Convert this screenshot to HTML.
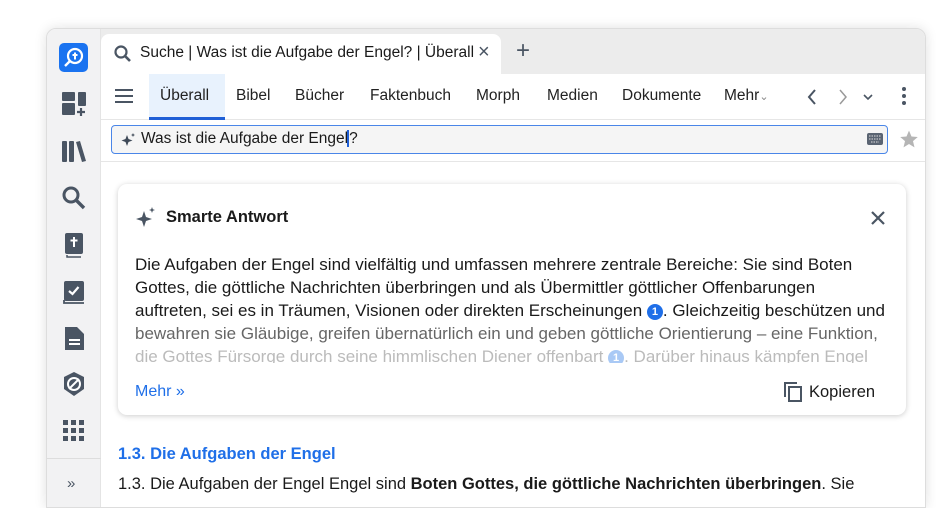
<!DOCTYPE html>
<html><head><meta charset="utf-8"><style>
*{box-sizing:border-box;margin:0;padding:0}
body{width:936px;height:496px;overflow:hidden;background:#fff;font-family:"Liberation Sans",sans-serif;color:#1a1a1a;position:relative}
.win{position:absolute;left:46px;top:28px;width:880px;height:480px;background:#fff;border-radius:10px 10px 0 0;box-shadow:0 0 12px rgba(0,0,0,.12);overflow:hidden;border:1px solid #ddd}
.side{position:absolute;left:0;top:0;width:54px;height:100%;background:#f2f2f3;border-right:1px solid #e4e4e4}
.ic{position:absolute;left:13px}
.tabbar{position:absolute;left:54px;top:0;right:0;height:45px;background:#ececec}
.tab{position:absolute;left:0;top:5px;width:400px;height:40px;background:#fff;border-radius:8px 8px 0 0}
.t{position:absolute;white-space:nowrap}
.nav{position:absolute;left:54px;top:45px;right:0;height:46px;background:#fff;border-bottom:1px solid #e6e6e6;font-size:15.5px;color:#222}
.nav .t{top:13px}
.act{position:absolute;left:48px;top:0;width:76px;height:46px;background:#e8f2fd;border-bottom:3px solid #1f5fd6}
.srch{position:absolute;left:64px;top:96px;width:777px;height:29px;border:1.5px solid #4a86e8;border-radius:4px;background:#f5f5f5}
.card{position:absolute;left:71px;top:155px;width:788px;height:231px;background:#fff;border-radius:9px;box-shadow:0 1px 6px rgba(0,0,0,.2)}
.card .l{position:absolute;left:17px;font-size:17px;white-space:nowrap}
.n{display:inline-block;width:16px;height:16px;border-radius:50%;background:#1f6fe8;color:#fff;font-size:11px;font-weight:bold;text-align:center;line-height:16px;vertical-align:1px}
</style></head><body>
<div class="win">
 <div class="side">
  <div class="ic" style="top:14px;left:12px;width:29px;height:29px;background:#1a73f0;border-radius:5px">
   <svg width="29" height="29" viewBox="0 0 29 29"><circle cx="16" cy="13" r="7" fill="none" stroke="#fff" stroke-width="2.2"/><line x1="11" y1="18" x2="6" y2="23" stroke="#fff" stroke-width="2.4"/><path d="M16 9.5v7M13.5 12h5" stroke="#fff" stroke-width="2"/></svg></div>
  <svg class="ic" style="top:61px" width="28" height="28" viewBox="0 0 28 28" fill="#4a5563"><rect x="2" y="2" width="13" height="9" rx="1"/><rect x="18" y="2" width="8" height="14" rx="1"/><rect x="2" y="13" width="13" height="12" rx="1"/><path d="M21 18v8M17 22h8" stroke="#4a5563" stroke-width="2.2"/></svg>
  <svg class="ic" style="top:109px" width="28" height="28" viewBox="0 0 28 28" fill="#4a5563"><rect x="2" y="3" width="5" height="21" rx="1"/><rect x="9" y="3" width="5" height="21" rx="1"/><path d="M16 4l4-1 6 20-4 1z"/></svg>
  <svg class="ic" style="top:155px" width="28" height="28" viewBox="0 0 28 28"><circle cx="11" cy="11" r="7" fill="none" stroke="#4a5563" stroke-width="3"/><line x1="16" y1="16" x2="24" y2="24" stroke="#4a5563" stroke-width="3.4"/></svg>
  <svg class="ic" style="top:202px" width="28" height="28" viewBox="0 0 28 28"><rect x="5" y="2" width="18" height="21" rx="2" fill="#4a5563"/><path d="M14 6v10M10.5 9.5h7" stroke="#fff" stroke-width="2"/><path d="M7 24v2h14" stroke="#4a5563" stroke-width="1.5" fill="none"/></svg>
  <svg class="ic" style="top:249px" width="28" height="28" viewBox="0 0 28 28"><rect x="4" y="3" width="20" height="20" rx="2" fill="#4a5563"/><path d="M9 13l3.5 3 6-7" stroke="#fff" stroke-width="2.2" fill="none"/><path d="M4 22v3h20" stroke="#4a5563" stroke-width="1.8" fill="none"/></svg>
  <svg class="ic" style="top:295px" width="28" height="28" viewBox="0 0 28 28"><path d="M5 3h12l7 7v16H5z" fill="#4a5563"/><path d="M9 16h11M9 20h11" stroke="#fff" stroke-width="2"/></svg>
  <svg class="ic" style="top:341px" width="28" height="28" viewBox="0 0 28 28"><path d="M14 2l10 5v12l-10 7-10-7V7z" fill="#4a5563"/><circle cx="14" cy="14" r="6" fill="none" stroke="#fff" stroke-width="2"/><path d="M9 19l10-10" stroke="#fff" stroke-width="2"/></svg>
  <svg class="ic" style="top:388px" width="28" height="28" viewBox="0 0 28 28" fill="#4a5563"><rect x="3" y="3" width="5" height="5"/><rect x="11" y="3" width="5" height="5"/><rect x="19" y="3" width="5" height="5"/><rect x="3" y="11" width="5" height="5"/><rect x="11" y="11" width="5" height="5"/><rect x="19" y="11" width="5" height="5"/><rect x="3" y="19" width="5" height="5"/><rect x="11" y="19" width="5" height="5"/><rect x="19" y="19" width="5" height="5"/></svg>
  <div style="position:absolute;left:0;top:429px;width:54px;height:1px;background:#ddd"></div>
  <div class="t" style="left:20px;top:446px;font-size:15px;color:#4a5563">»</div>
 </div>
 <div class="tabbar">
  <div class="tab">
   <svg style="position:absolute;left:12px;top:10px" width="20" height="20" viewBox="0 0 20 20"><circle cx="8" cy="8" r="5.5" fill="none" stroke="#4a5563" stroke-width="2.2"/><line x1="12" y1="12" x2="17" y2="17" stroke="#4a5563" stroke-width="2.6"/></svg>
   <div class="t" style="left:39px;top:10px;font-size:15.5px">Suche | Was ist die Aufgabe der Engel? | Überall</div>
   <div class="t" style="left:377px;top:7px;font-size:20px;color:#4a5563">×</div>
  </div>
  <div class="t" style="left:415px;top:8px;font-size:24px;color:#4a5563">+</div>
 </div>
 <div class="nav">
  <svg style="position:absolute;left:14px;top:14px" width="18" height="16"><path d="M0 2h18M0 8h18M0 14h18" stroke="#4a5563" stroke-width="2"/></svg>
  <div class="act"></div>
  <div class="t" style="left:59px">Überall</div>
  <div class="t" style="left:135px">Bibel</div>
  <div class="t" style="left:194px">Bücher</div>
  <div class="t" style="left:269px">Faktenbuch</div>
  <div class="t" style="left:375px">Morph</div>
  <div class="t" style="left:446px">Medien</div>
  <div class="t" style="left:521px">Dokumente</div>
  <div class="t" style="left:623px">Mehr<span style="font-size:11px;color:#888">&#8964;</span></div>
  <svg style="position:absolute;left:706px;top:14px" width="80" height="18"><path d="M8 2l-6 7 6 7" stroke="#4a5563" stroke-width="2" fill="none"/><path d="M33 2l6 7-6 7" stroke="#999" stroke-width="1.5" fill="none"/><path d="M57 7l4 4 4-4" stroke="#4a5563" stroke-width="1.6" fill="none"/></svg>
  <svg style="position:absolute;left:800px;top:12px" width="6" height="20" fill="#4a5563"><circle cx="3" cy="3" r="2"/><circle cx="3" cy="10" r="2"/><circle cx="3" cy="17" r="2"/></svg>
 </div>
 <div style="position:absolute;left:54px;top:91px;right:0;height:42px;border-bottom:1px solid #e6e6e6"></div>
 <div class="srch">
  <svg style="position:absolute;left:8px;top:6px" width="16" height="16" viewBox="0 0 16 16" fill="#3f4a58"><path d="M7 3l1.5 4 4 1.5-4 1.5L7 14l-1.5-4-4-1.5 4-1.5z"/><path d="M13 1l.6 1.4 1.4.6-1.4.6L13 5l-.6-1.4L11 3l1.4-.6z"/></svg>
  <div class="t" style="left:29px;top:4px;font-size:15.5px">Was ist die Aufgabe der Engel<span style="border-left:2px solid #1f5fd6;margin-left:-1px"></span>?</div>
  <svg style="position:absolute;right:4px;top:7px" width="16" height="12"><rect x="0" y="0" width="16" height="12" rx="2" fill="#5a6472"/><path d="M2 3h12M2 6h12M4 9h8" stroke="#ddd" stroke-width="1" stroke-dasharray="1.5 1"/></svg>
 </div>
 <svg style="position:absolute;left:852px;top:100px" width="20" height="20" viewBox="0 0 24 24"><path d="M12 2l3 7 7.5.6-5.7 5 1.8 7.4L12 18l-6.6 4 1.8-7.4-5.7-5L9 9z" fill="#b5b5b5"/></svg>
 <div class="card">
  <svg style="position:absolute;left:17px;top:22px" width="22" height="22" viewBox="0 0 22 22" fill="#4a5563"><path d="M9 5l2 6 6 2-6 2-2 6-2-6-6-2 6-2z"/><path d="M17 1l.8 2.2L20 4l-2.2.8L17 7l-.8-2.2L14 4l2.2-.8z"/></svg>
  <div class="t" style="left:48px;top:24px;font-size:16.5px;font-weight:bold">Smarte Antwort</div>
  <svg style="position:absolute;left:753px;top:27px" width="14" height="14"><path d="M1 1l12 12M13 1L1 13" stroke="#4a5563" stroke-width="2.2"/></svg>
  <div class="l" style="top:71px">Die Aufgaben der Engel sind vielfältig und umfassen mehrere zentrale Bereiche: Sie sind Boten</div>
  <div class="l" style="top:94px">Gottes, die göttliche Nachrichten überbringen und als Übermittler göttlicher Offenbarungen</div>
  <div class="l" style="top:117px">auftreten, sei es in Träumen, Visionen oder direkten Erscheinungen <span class="n">1</span>. Gleichzeitig beschützen und</div>
  <div class="l" style="top:140px;color:#666">bewahren sie Gläubige, greifen übernatürlich ein und geben göttliche Orientierung – eine Funktion,</div>
  <div style="position:absolute;left:0;top:163px;width:100%;height:16px;overflow:hidden"><div class="l" style="top:0;color:#bbb">die Gottes Fürsorge durch seine himmlischen Diener offenbart <span class="n" style="background:#a9c9f5">1</span>. Darüber hinaus kämpfen Engel</div></div>
  <div class="t" style="left:17px;top:199px;font-size:16px;color:#1f6fe8">Mehr »</div>
  <svg style="position:absolute;left:665px;top:197px" width="20" height="22" viewBox="0 0 20 22"><path d="M2 16V2h12" stroke="#4a5563" stroke-width="2" fill="none"/><rect x="6" y="6" width="12" height="14" stroke="#4a5563" stroke-width="2" fill="none"/></svg>
  <div class="t" style="left:691px;top:199px;font-size:16.5px">Kopieren</div>
 </div>
 <div class="t" style="left:71px;top:416px;font-size:16.5px;font-weight:bold;color:#1f6fe8">1.3. Die Aufgaben der Engel</div>
 <div class="t" style="left:71px;top:446px;font-size:16.5px">1.3. Die Aufgaben der Engel Engel sind <b>Boten Gottes, die göttliche Nachrichten überbringen</b>. Sie</div>
</div>
</body></html>
